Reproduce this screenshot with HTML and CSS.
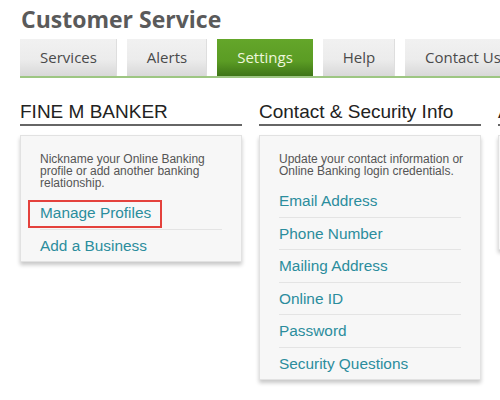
FILE: index.html
```html
<!DOCTYPE html>
<html>
<head>
<meta charset="utf-8">
<link rel="stylesheet" href="styles.css">
</head>
<body>
<div class="page">
  <h1 class="title">Customer Service</h1>
  <nav class="tabs">
    <a class="tab tab-services">Services</a>
    <a class="tab tab-alerts">Alerts</a>
    <a class="tab tab-settings active">Settings</a>
    <a class="tab tab-help">Help</a>
    <a class="tab tab-contact">Contact Us</a>
  </nav>
  <div class="columns">
    <section class="col">
      <h2 class="col-head">FINE M BANKER</h2>
      <div class="card">
        <p class="desc">Nickname your Online Banking profile or add another banking relationship.</p>
        <a class="link highlight">Manage Profiles</a>
        <a class="link">Add a Business</a>
      </div>
    </section>
    <section class="col">
      <h2 class="col-head">Contact &amp; Security Info</h2>
      <div class="card">
        <p class="desc">Update your contact information or Online Banking login credentials.</p>
        <a class="link">Email Address</a>
        <a class="link">Phone Number</a>
        <a class="link">Mailing Address</a>
        <a class="link">Online ID</a>
        <a class="link">Password</a>
        <a class="link">Security Questions</a>
      </div>
    </section>
    <section class="col">
      <h2 class="col-head">Account Settings</h2>
      <div class="card">
        <p class="desc">Manage your account preferences, paperless settings and more.</p>
        <a class="link">Paperless</a>
        <a class="link">Preferences</a>
      </div>
    </section>
  </div>
</div>
</body>
</html>
```
FILE: styles.css
```css
html, body {
  margin: 0;
  padding: 0;
  background: #ffffff;
  overflow: hidden;
  width: 500px;
  height: 400px;
}

.page {
  padding: 6px 0 0 20px;
}

.title {
  margin: 0 0 7px 1px;
  font-family: "Open Sans", sans-serif;
  font-weight: 700;
  font-size: 23px;
  line-height: 26px;
  color: #5a5a5a;
}

.tabs {
  display: flex;
  gap: 10px;
  border-bottom: 2px solid #9dc682;
  white-space: nowrap;
}

.tab {
  flex-shrink: 0;
  display: block;
  box-sizing: border-box;
  height: 37px;
  line-height: 37px;
  text-align: center;
  font-family: "Open Sans", sans-serif;
  font-size: 15px;
  color: #4a4a4a;
  background: linear-gradient(to bottom, #f1f1f1 0%, #ececec 55%, #d8d8d8 100%);
  box-shadow: inset -1px 0 0 #dedede;
}

.tab-services { width: 97px; }
.tab-alerts { width: 80px; }
.tab-settings { width: 96px; }
.tab-help { width: 72px; }
.tab-contact { padding: 0 20px; }

.tab.active {
  color: #eef6dc;
  background: linear-gradient(to bottom, #64a62a 0%, #5b9c24 60%, #3e7517 100%);
  box-shadow: none;
}

.columns {
  display: flex;
  gap: 17px;
  margin-top: 23px;
}

.col {
  flex: 0 0 222px;
  width: 222px;
}

.col-head {
  margin: 0;
  padding-bottom: 1px;
  font-family: "Liberation Sans", Arial, sans-serif;
  font-weight: 400;
  font-size: 19px;
  line-height: 22px;
  color: #222222;
  border-bottom: 2px solid #666666;
  white-space: nowrap;
}

.card {
  margin-top: 9px;
  background: #f7f7f7;
  border: 1px solid #e2e2e2;
  box-shadow: 0 3px 4px rgba(0, 0, 0, 0.22);
  padding: 0 19px 0 19px;
}

.desc {
  margin: 0 -4px 8px 0;
  padding-top: 17px;
  font-family: "Liberation Sans", Arial, sans-serif;
  font-size: 12px;
  line-height: 12px;
  color: #555555;
}

.link {
  display: block;
  position: relative;
  font-family: "Liberation Sans", Arial, sans-serif;
  font-size: 15.4px;
  line-height: 31.5px;
  color: #2b8d9d;
  border-bottom: 1px solid #e4e4e4;
}

.link:last-child {
  border-bottom: none;
}

.highlight::after {
  content: "";
  position: absolute;
  left: -12px;
  top: 3px;
  width: 134px;
  height: 28px;
  box-sizing: border-box;
  border: 2px solid #e4413c;
}
```
